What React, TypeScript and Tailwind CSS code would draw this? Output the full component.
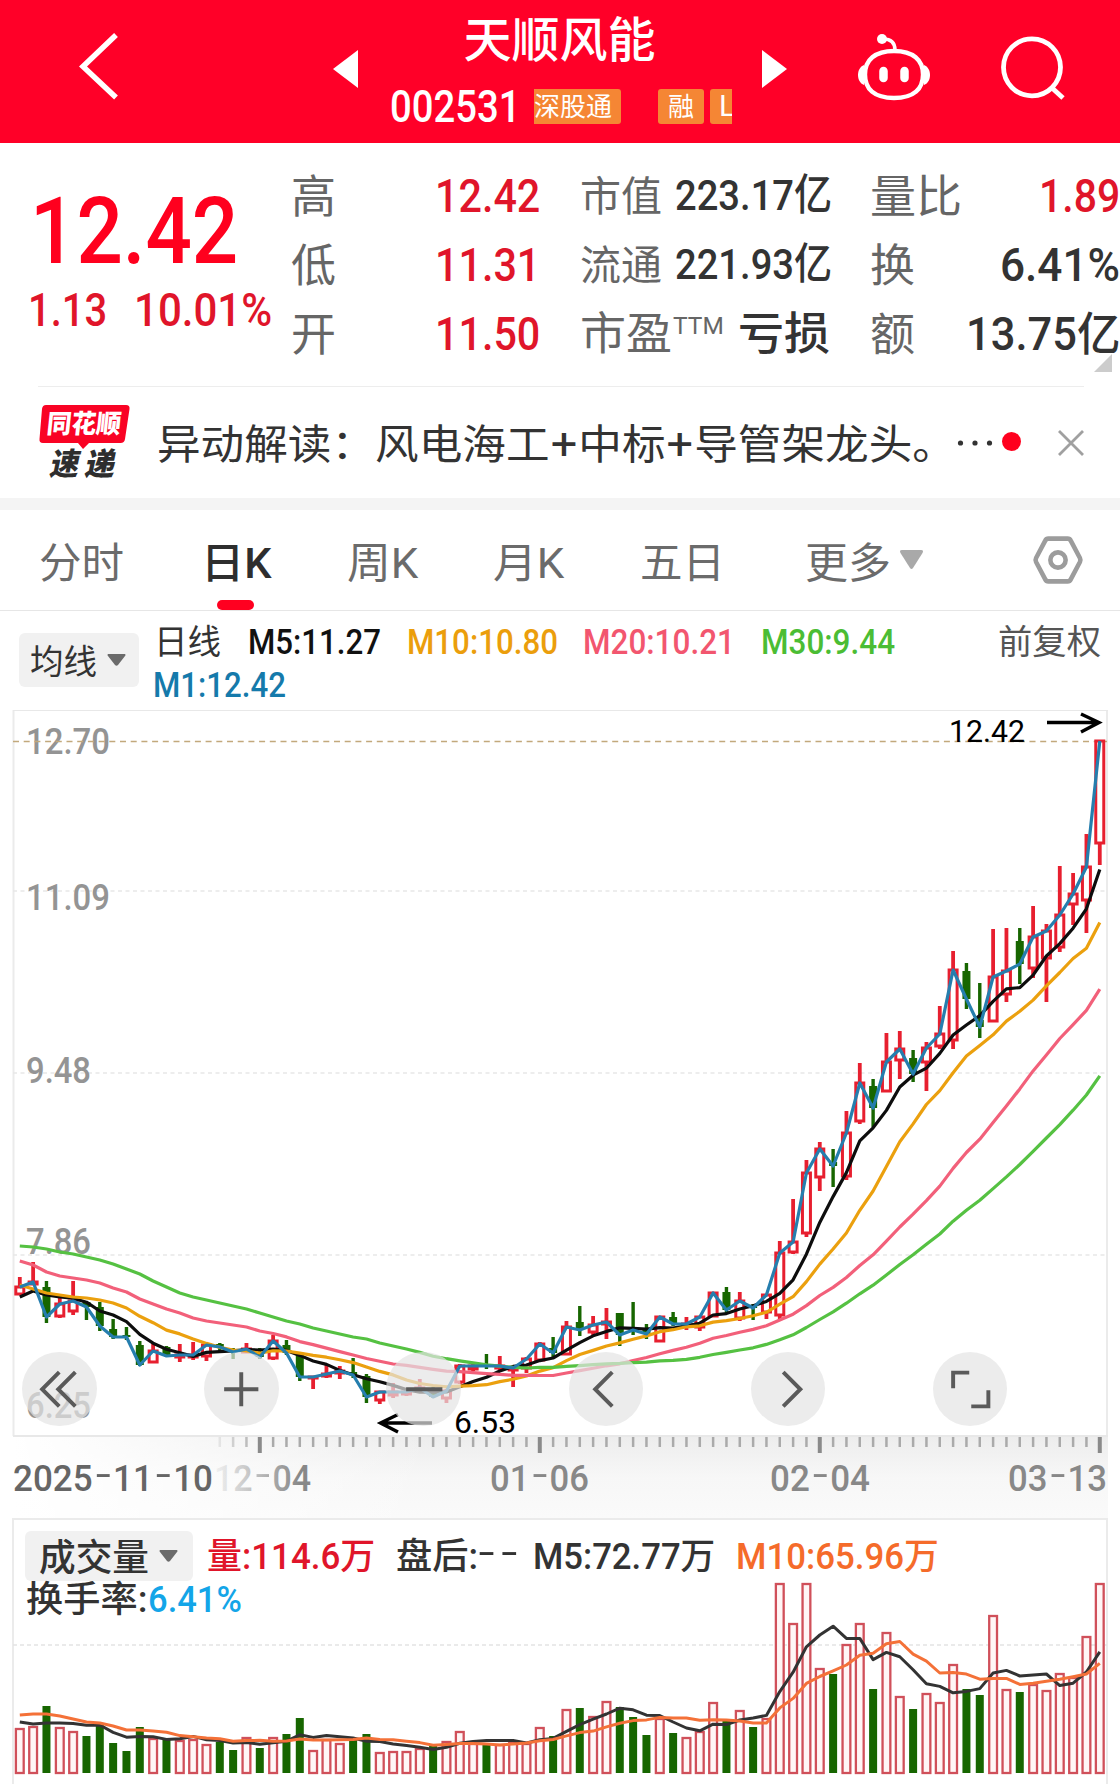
import { useLayoutEffect, useRef, useState } from 'react';
import type { ReactNode } from 'react';
import clsx from 'clsx';

type Candle = [up: 0 | 1, high: number, top: number, bottom: number, low: number];

// y offsets from the top of the price panel
const CANDLES: Candle[] = [
  [1, 567, 577, 584, 584], [1, 552, 572, 574, 574], [0, 571, 577, 607, 613], [1, 588, 594, 606, 608],
  [1, 571, 591, 601, 605], [0, 592, 592, 597, 610], [0, 592, 597, 616, 621], [0, 609, 619, 627, 629],
  [0, 617, 625, 627, 630], [0, 631, 635, 655, 656], [1, 633, 641, 652, 652], [0, 636, 637, 646, 647],
  [1, 634, 645, 647, 652], [1, 632, 645, 647, 650], [1, 633, 635, 646, 651], [0, 633, 634, 637, 641],
  [0, 638, 639, 642, 649], [1, 633, 639, 642, 643], [0, 638, 642, 647, 649], [1, 625, 631, 648, 650],
  [0, 630, 635, 643, 645], [0, 643, 645, 667, 671], [1, 666, 667, 668, 679], [1, 654, 664, 666, 668],
  [1, 656, 661, 663, 669], [0, 648, 662, 665, 668], [0, 664, 666, 687, 693], [1, 681, 682, 690, 694],
  [1, 673, 682, 685, 688], [1, 679, 682, 684, 686], [1, 669, 678, 680, 681], [0, 677, 679, 687, 688],
  [1, 679, 681, 688, 693], [1, 654, 656, 672, 674], [1, 653, 656, 659, 661], [0, 644, 654, 656, 659],
  [1, 646, 656, 658, 660], [1, 657, 658, 660, 677], [1, 647, 649, 658, 663], [1, 632, 634, 650, 651],
  [0, 627, 638, 643, 647], [1, 611, 617, 644, 645], [0, 596, 612, 620, 626], [1, 606, 615, 622, 625],
  [1, 598, 612, 614, 629], [0, 603, 603, 625, 636], [0, 592, 618, 620, 625], [0, 614, 620, 624, 629],
  [1, 607, 607, 631, 631], [0, 602, 607, 614, 616], [1, 607, 614, 616, 620], [1, 606, 607, 617, 621],
  [1, 582, 583, 606, 607], [0, 577, 582, 600, 603], [1, 582, 591, 608, 611], [0, 594, 595, 598, 610],
  [1, 584, 585, 602, 609], [1, 531, 543, 605, 610], [1, 489, 532, 542, 544], [1, 450, 463, 523, 527],
  [1, 432, 439, 467, 481], [0, 439, 452, 456, 477], [1, 401, 423, 466, 470], [1, 353, 373, 411, 414],
  [0, 369, 376, 398, 417], [1, 323, 352, 381, 381], [1, 321, 339, 350, 369], [0, 340, 348, 364, 372],
  [1, 332, 338, 352, 381], [1, 296, 324, 336, 339], [1, 241, 260, 330, 339], [0, 253, 261, 289, 299],
  [0, 273, 310, 317, 328], [1, 219, 267, 311, 311], [1, 218, 261, 284, 292], [0, 218, 231, 254, 274],
  [1, 196, 227, 258, 268], [1, 214, 221, 248, 292], [1, 156, 205, 237, 242], [1, 163, 184, 194, 215],
  [1, 124, 157, 190, 223], [1, 30, 31, 133, 155],
];

const VOLUMES = [
  45, 47, 67, 46, 42, 37, 48, 30, 22, 46, 35, 35, 33, 34, 29, 31, 23, 36, 25, 36,
  39, 55, 23, 34, 30, 33, 39, 21, 22, 22, 25, 28, 32, 42, 30, 30, 29, 31, 30, 46,
  37, 64, 65, 57, 72, 66, 56, 38, 55, 40, 36, 42, 71, 53, 63, 46, 55, 190, 150, 190,
  105, 99, 129, 150, 84, 141, 77, 64, 80, 71, 109, 84, 78, 158, 84, 81, 89, 83, 100, 96,
  137, 190,
];

// averages for the days whose window starts before the visible range
const M5_SEED = [587, 581, 585, 587];
const M10_SEED = [575, 579, 583, 585, 587, 588, 590, 593, 598];
const M20_SEED = [551, 555, 562, 566, 568, 570, 573, 578, 582, 589, 594, 599, 603, 608, 611, 613, 615, 617, 621];
const M30_SEED = [
  536, 537, 539, 542, 544, 547, 550, 554, 559, 564, 571, 577, 583, 587, 590,
  593, 596, 599, 603, 607, 611, 614, 618, 621, 624, 627, 629, 633, 636,
];
const V5_SEED = [51, 49, 50, 50];
const V10_SEED = [58, 59, 59, 57, 54, 51, 50, 47, 43];

const UP = '#e71f2f';
const DOWN = '#176600';
const AXIS_FONT = 'Roboto, "Liberation Sans", sans-serif';

const xAt = (i: number) => 19.8 + i * 13.333;
const closes = CANDLES.map(([up, , top, bottom]) => (up ? top : bottom));

function average(values: number[], days: number, seed: number[]) {
  return values.map((_, i) =>
    i < days - 1 ? seed[i] : values.slice(i - days + 1, i + 1).reduce((a, b) => a + b, 0) / days
  );
}

const toPoints = (ys: number[]) => ys.map((y, i) => `${xAt(i).toFixed(1)},${y.toFixed(1)}`).join(' ');

// Squeezes its text to the width of the box
function Fit({ children, className }: { children: ReactNode; className?: string }) {
  const box = useRef<HTMLSpanElement>(null);
  const text = useRef<HTMLSpanElement>(null);
  const [scale, setScale] = useState(1);

  useLayoutEffect(() => {
    if (box.current && text.current) setScale(box.current.clientWidth / text.current.offsetWidth);
  }, []);

  return (
    <span ref={box} className={clsx('block shrink-0 leading-none whitespace-nowrap', className)}>
      <span ref={text} className="inline-block origin-left" style={{ transform: `scaleX(${scale})` }}>
        {children}
      </span>
    </span>
  );
}

function Header() {
  return (
    <header className="flex h-[143px] items-start bg-[#ff0028] text-white">
      <svg className="mt-[31px] ml-[78px] h-[70px] w-[42px] shrink-0" viewBox="0 0 42 70" fill="none" stroke="currentColor" strokeWidth="5.500">
        <path d="M38 4 5 35.500 38 66.500" />
      </svg>
      <svg className="mt-[50px] ml-[213px] h-[38px] w-[25px] shrink-0" viewBox="0 0 25 38" fill="currentColor">
        <path d="M25 0v38L0 19z" />
      </svg>
      <div className="ml-[26px] w-[348px] shrink-0 overflow-hidden">
        <h1 className="mt-[12px] h-[58px] pl-[3px] text-center text-[48px] leading-[58px] font-medium">天顺风能</h1>
        <div className="mt-[18px] flex h-[36px] items-center pl-[6px]">
          <Fit className="w-[130px] text-[45px] font-medium">002531</Fit>
          <span className="ml-[14px] flex h-[35px] w-[87px] shrink-0 items-center rounded-r-[3px] bg-[#f58634] pt-[2px] text-[26px] leading-none">深股通</span>
          <span className="ml-[37px] flex h-[35px] w-[46px] shrink-0 items-center justify-center rounded-[3px] bg-[#f58634] pt-[2px] text-[26px] leading-none">融</span>
          <span className="ml-[6px] flex h-[35px] w-[22px] shrink-0 items-center overflow-hidden rounded-l-[3px] bg-[#f58634] pl-[9px] text-[30px] leading-none">L</span>
        </div>
      </div>
      <svg className="mt-[50px] ml-[30px] h-[38px] w-[25px] shrink-0" viewBox="0 0 25 38" fill="currentColor">
        <path d="M0 0v38l25-19z" />
      </svg>
      <svg className="mt-[33px] ml-[70px] h-[68px] w-[74px] shrink-0" viewBox="0 0 74 68" fill="none" stroke="currentColor" strokeWidth="4.400">
        <path d="M37 18c19 0 29 9 29 23.500S57 65 37 65 8 56 8 41.500 18 18 37 18z" />
        <path d="M26 6c8 0 12 4 12 11" strokeWidth="3.500" />
        <circle cx="25" cy="6" r="5" fill="currentColor" stroke="none" />
        <path d="M7 32c-8 3-8 17 0 20zM67 32c8 3 8 17 0 20z" fill="currentColor" stroke="none" />
        <path d="M26.500 38v7M47.500 38v7" strokeWidth="8.500" strokeLinecap="round" />
      </svg>
      <svg className="mt-[35px] ml-[69px] h-[66px] w-[66px] shrink-0" viewBox="0 0 66 66" fill="none" stroke="currentColor" strokeWidth="4.800">
        <circle cx="32" cy="32.300" r="28.500" />
        <path d="M51 52l12 11" />
      </svg>
    </header>
  );
}

function Quote() {
  return (
    <section className="relative flex h-[243px] text-[#666]">
      <div className="w-[291px] shrink-0 text-[#e0152a]">
        <Fit className="mt-[42px] ml-[30px] w-[208px] text-[93px] font-medium text-[#ff001e]">12.42</Fit>
        <div className="mt-[9px] flex text-[46px] font-medium">
          <Fit className="ml-[28px] w-[79px]">1.13</Fit>
          <Fit className="ml-[27px] w-[138px]">10.01%</Fit>
        </div>
      </div>
      <div className="w-[249px] shrink-0 pt-[18px] text-[45px]">
        {[['高', '12.42'], ['低', '11.31'], ['开', '11.50']].map(([label, value]) => (
          <div key={label} className="flex h-[69px] items-center justify-between">
            <span className="pt-[3px] leading-none">{label}</span>
            <Fit className="w-[105px] text-[46px] font-medium text-[#e0152a]">{value}</Fit>
          </div>
        ))}
      </div>
      <div className="ml-[40px] w-[252px] shrink-0 pt-[18px] text-[41px]">
        {[['市值', '223.17亿'], ['流通', '221.93亿']].map(([label, value]) => (
          <div key={label} className="flex h-[69px] items-center justify-between">
            <span className="pt-[4px] leading-none">{label}</span>
            <Fit className="w-[157px] text-[43px] font-medium text-[#333]">{value}</Fit>
          </div>
        ))}
        <div className="flex h-[69px] items-center">
          <Fit className="w-[92px] pt-[2px] text-[45px]">市盈</Fit>
          <Fit className="mb-[15px] ml-[1px] w-[51px] text-[24px]">TTM</Fit>
          <Fit className="ml-[14px] w-[92px] pt-[2px] text-[45px] font-medium text-[#333]">亏损</Fit>
        </div>
      </div>
      <div className="ml-[38px] w-[250px] shrink-0 pt-[18px] text-[45px] text-[#333]">
        <div className="flex h-[69px] items-center justify-between">
          <Fit className="w-[92px] pt-[3px] text-[#666]">量比</Fit>
          <Fit className="w-[81px] text-[46px] font-medium text-[#e0152a]">1.89</Fit>
        </div>
        <div className="flex h-[69px] items-center justify-between">
          <span className="pt-[3px] leading-none text-[#666]">换</span>
          <Fit className="w-[120px] text-[46px] font-medium">6.41%</Fit>
        </div>
        <div className="flex h-[69px] items-center justify-between">
          <span className="pt-[3px] leading-none text-[#666]">额</span>
          <Fit className="w-[154px] text-[46px] font-medium">13.75亿</Fit>
        </div>
      </div>
      <svg className="absolute right-[8px] bottom-[14px] h-[18px] w-[18px]" viewBox="0 0 18 18" fill="#ccc">
        <path d="M18 0v18H0z" />
      </svg>
    </section>
  );
}

function NewsBar() {
  return (
    <section className="mr-[36px] ml-[38px] flex h-[112px] items-center border-t border-[#ededed]">
      <div className="relative flex h-[80px] w-[93px] shrink-0 flex-col items-center">
        <svg className="absolute inset-0 h-[80px] w-[93px]" viewBox="0 0 93 80" fill="#f90324">
          <path d="M8 2h80q4 0 3.500 4L87 36q-.5 4-4.500 4H51l-6 6-5-6H5q-4 0-3.500-4L4 6q.5-4 4-4z" />
        </svg>
        <Fit className="relative mt-[8px] mr-[2px] w-[74px] -skew-x-6 text-[26px] font-black text-white">同花顺</Fit>
        <div className="relative mt-[12px] mr-[3px] flex -skew-x-12 gap-[6px] text-[31px] leading-none font-black text-[#2e2e2e]">
          <Fit className="w-[29px]">速</Fit>
          <Fit className="w-[30px]">递</Fit>
        </div>
      </div>
      <Fit className="ml-[26px] w-[799px] pt-[3px] text-[41px] text-[#333]">
        异动解读：风电海工<span className="px-[1px] text-[44px] leading-none">+</span>中标
        <span className="px-[1px] text-[44px] leading-none">+</span>导管架龙头。
      </Fit>
      <svg className="ml-px h-[6px] w-[36px] shrink-0" viewBox="0 0 36 6" fill="#333">
        <circle cx="3.500" cy="3" r="2.600" />
        <circle cx="18" cy="3" r="2.600" />
        <circle cx="32.500" cy="3" r="2.600" />
      </svg>
      <span className="mb-[2px] ml-[9px] h-[19px] w-[19px] shrink-0 rounded-full bg-[#ff001e]" />
      <svg className="ml-auto h-[26px] w-[26px] shrink-0" viewBox="0 0 26 26" fill="none" stroke="#a0a0a0" strokeWidth="2.800">
        <path d="M1 1l24 24M25 1L1 25" />
      </svg>
    </section>
  );
}

function Tabs() {
  return (
    <nav className="flex h-[101px] items-center border-b border-[#e6e6e6] text-[42px] leading-none text-[#6b6b6b]">
      <Fit className="ml-[39px] w-[85px] pt-[7px]">分时</Fit>
      <span className="relative ml-[77px] flex h-full shrink-0 items-center font-medium text-[#2e2e2e]">
        <Fit className="w-[71px] pt-[7px]">日K</Fit>
        <i className="absolute bottom-0 left-[16px] h-[10px] w-[37px] rounded-[5px] bg-[#ff0020]" />
      </span>
      <Fit className="ml-[75px] w-[71px] pt-[7px]">周K</Fit>
      <Fit className="ml-[75px] w-[71px] pt-[7px]">月K</Fit>
      <Fit className="ml-[76px] w-[85px] pt-[7px]">五日</Fit>
      <Fit className="ml-[80px] w-[86px] pt-[7px]">更多</Fit>
      <svg className="ml-[9px] h-[20px] w-[23px]" viewBox="0 0 23 20" fill="#a9a9a9">
        <path d="M2 0h19q3 0 1.500 3L13 18q-1.500 2-3 0L.5 3Q-1 0 2 0z" />
      </svg>
      <svg className="ml-[109px] h-[50px] w-[52px]" viewBox="0 0 51 48" fill="none" stroke="#9c9c9c" strokeWidth="4.500" strokeLinejoin="round">
        <path d="M16 3h19q2 0 3 2l9 17q1 2 0 4l-9 17q-1 2-3 2H16q-2 0-3-2L4 26q-1-2 0-4l9-17q1-2 3-2z" />
        <circle cx="25.500" cy="24" r="7.500" />
      </svg>
    </nav>
  );
}

function Caret() {
  return (
    <svg className="h-[12px] w-[19px] shrink-0" viewBox="0 0 19 12" fill="#6b6b6b">
      <path d="M1 0h17q1 1 0 2l-7 9q-1.500 1.500-3 0L1 2Q0 1 1 0z" />
    </svg>
  );
}

function AverageLegend() {
  return (
    <div className="flex h-[98.500px] items-start text-[35px] font-medium">
      <button className="mt-[22px] ml-[19px] flex h-[54px] w-[120px] shrink-0 items-center rounded-[6px] bg-[#f1f1f1] pl-[11px] text-[34px] font-normal text-[#333]">
        <Fit className="mr-[10px] w-[67px] pt-[3px]">均线</Fit>
        <Caret />
      </button>
      <div className="ml-[15px] flex-1 pt-[14px]">
        <div className="flex">
          <Fit className="w-[67px] text-[34px] font-normal text-[#333]">日线</Fit>
          <Fit className="ml-[27px] w-[133px] text-[#111]">M5:11.27</Fit>
          <Fit className="ml-[26px] w-[151px] text-[#eb9e0c]">M10:10.80</Fit>
          <Fit className="ml-[25px] w-[152px] text-[#f2566f]">M20:10.21</Fit>
          <Fit className="ml-[26px] w-[134px] text-[#4bbd34]">M30:9.44</Fit>
          <Fit className="ml-[103px] w-[103px] text-[34px] font-normal text-[#555]">前复权</Fit>
        </div>
        <Fit className="mt-[8px] -ml-[1px] w-[133px] text-[#157aab]">M1:12.42</Fit>
      </div>
    </div>
  );
}

// Dates on the axis have a long thin dash
function DateLabel({ x, width, fill, children }: { x: number; width: number; fill?: string; children: string }) {
  return (
    <text x={x} y="781" fill={fill} textLength={width} lengthAdjust="spacingAndGlyphs">
      {children.split('-').map((part, i) => [
        i > 0 && <tspan key={`dash-${i}`} dx="3" dy="3" fontSize="58" fontWeight="300">-</tspan>,
        <tspan key={i} dx={i > 0 ? 2 : 0} dy={i > 0 ? -3 : 0}>{part}</tspan>,
      ])}
    </text>
  );
}

function PriceChart() {
  const priceLabels: [string, number, number][] = [
    ['12.70', 45, 84], ['11.09', 201, 84], ['9.48', 374, 65], ['7.86', 544.5, 65], ['6.25', 709, 65],
  ];

  return (
    <svg className="block h-[808px] w-full" viewBox="0 0 1120 808" fill="none">
      <defs>
        <linearGradient id="axis" x1="0" y1="0" x2="0" y2="1">
          <stop offset="0" stopColor="#ededed" />
          <stop offset="0.5" stopColor="#f7f7f7" />
          <stop offset="1" stopColor="#fafafa" />
        </linearGradient>
        <linearGradient id="axis-left" x1="0" y1="0" x2="1" y2="0">
          <stop offset="0" stopColor="#fff" />
          <stop offset="1" stopColor="#fff" stopOpacity="0" />
        </linearGradient>
        <linearGradient id="fade" gradientUnits="userSpaceOnUse" x1="212" y1="0" x2="300" y2="0">
          <stop offset="0" stopColor="#888" stopOpacity="0.05" />
          <stop offset="1" stopColor="#888" />
        </linearGradient>
      </defs>

      <rect x="13" y="727" width="1095" height="81" fill="url(#axis)" />
      <rect x="13" y="727" width="420" height="81" fill="url(#axis-left)" />
      <path d="M13.500 726V0M1107 0v726" stroke="#ebebeb" strokeWidth="2" />
      <path d="M13 0h1095M13 726h1095" stroke="#e8e8e8" strokeWidth="2" />
      <path d="M13 181h1094M13 363h1094M13 545h1094" stroke="#e8e8e8" strokeWidth="1.500" strokeDasharray="4 3.500" />

      <g fill="#949494" fontFamily={AXIS_FONT} fontSize="36" fontWeight="500">
        {priceLabels.map(([label, y, width]) => (
          <text key={label} x="26" y={y - 1} textLength={width} lengthAdjust="spacingAndGlyphs">{label}</text>
        ))}
      </g>
      <path d="M13 31.500h1094" stroke="#c2a97c" strokeWidth="1.600" strokeDasharray="6 4.700" />

      {CANDLES.map(([up, high, top, bottom, low], i) => {
        const x = xAt(i);
        return up ? (
          <g key={i} stroke={UP} strokeWidth="3">
            <path d={`M${x} ${high}V${top}M${x} ${bottom}V${low}`} strokeWidth="3.800" />
            <rect x={x - 4} y={top} width="8" height={Math.max(bottom - top, 1)} fill="#fff" />
          </g>
        ) : (
          <g key={i} fill={DOWN}>
            <rect x={x - 1.7} y={high} width="3.400" height={low - high} />
            <rect x={x - 4} y={top} width="8" height={bottom - top} />
          </g>
        );
      })}

      <g strokeWidth="3.200" strokeLinejoin="round">
        <polyline points={toPoints(average(closes, 5, M5_SEED))} stroke="#0d0d0d" />
        <polyline points={toPoints(average(closes, 10, M10_SEED))} stroke="#eba00e" />
        <polyline points={toPoints(average(closes, 20, M20_SEED))} stroke="#f2607a" />
        <polyline points={toPoints(average(closes, 30, M30_SEED))} stroke="#55c142" />
        <polyline points={toPoints(closes)} stroke="#257eae" />
      </g>

      <g fill="#000" fontFamily={AXIS_FONT} fontSize="32">
        <text x="949" y="31.500" textLength="76" lengthAdjust="spacingAndGlyphs">12.42</text>
        <text x="454" y="723" textLength="62" lengthAdjust="spacingAndGlyphs">6.53</text>
      </g>
      <g stroke="#000" strokeWidth="3.400">
        <path d="M1047 12.500h51M1081 4l18 8.500L1081 22" />
        <path d="M432 713h-51M398 704.500L380.500 713l17.500 9" />
      </g>

      {CANDLES.map((_, i) => {
        if (i < 15) return null;
        const major = i % 21 === 18;
        return (
          <path
            key={i}
            d={`M${xAt(i)} 727v${major ? 16 : 10}`}
            stroke={major ? '#8a8a8a' : '#aaa'}
            strokeWidth={major ? 4 : 2.5}
            opacity={i < 18 ? (i - 14) * 0.25 : 1}
          />
        );
      })}
      <g fontFamily={AXIS_FONT} fontSize="37" fontWeight="500" fill="#888">
        <DateLabel x={13} width={200} fill="#666">2025-11-10</DateLabel>
        <DateLabel x={214} width={97} fill="url(#fade)">12-04</DateLabel>
        <DateLabel x={490} width={99}>01-06</DateLabel>
        <DateLabel x={770} width={100}>02-04</DateLabel>
        <DateLabel x={1008} width={99}>03-13</DateLabel>
      </g>
    </svg>
  );
}

function ChartControls() {
  const icons = [
    'M37 20 20 37l17 17M53 20 36 37l17 17',
    'M37 20v34M20 37h34',
    'M20 37h36',
    'M43 20 26 37l17 17',
    'M32 20l17 17-17 17',
    'M20 36V20.500h16M38 54h17V38',
  ];
  return (
    <div className="absolute top-[642px] left-[22px] flex gap-[107.700px]">
      {icons.map(d => (
        <button key={d} className="h-[74.500px] w-[74.500px] rounded-full bg-[#e4e4e4]/70">
          <svg viewBox="0 0 74 74" fill="none" stroke="#5a5a5a" strokeWidth="3.900">
            <path d={d} />
          </svg>
        </button>
      ))}
    </div>
  );
}

function VolumePanel() {
  const base = 194;
  return (
    <section className="mr-[12px] ml-[12px] h-[267px] border-t-2 border-r-2 border-l-2 border-[#ebebeb] text-[36px] font-medium text-[#333]">
      <div className="flex h-[73px] items-center pt-[2px] pl-[11px]">
        <button className="mb-[2px] flex h-[50px] w-[168px] shrink-0 items-center rounded-[6px] bg-[#f1f1f1] pl-[14px] text-[37px]">
          <Fit className="mr-[10px] w-[110px] pt-[4px]">成交量</Fit>
          <Caret />
        </button>
        <Fit className="ml-[14px] w-[168px] text-[#e0152a]">量:114.6万</Fit>
        <Fit className="ml-[21px] w-[128px]">
          盘后:<span className="align-[-3px] text-[58px] leading-[0] font-light tracking-[6px]">--</span>
        </Fit>
        <Fit className="ml-[9px] w-[182px]">M5:72.77万</Fit>
        <Fit className="ml-[21px] w-[203px] text-[#f56b2a]">M10:65.96万</Fit>
      </div>
      <div className="-mt-[11px] flex pl-[12px]">
        <Fit className="w-[122px]">换手率:</Fit>
        <Fit className="w-[94px] text-[#13a5e8]">6.41%</Fit>
      </div>
      <svg className="-mt-[39px] -ml-[14px] block h-[204px] w-[1120px]" viewBox="0 0 1120 204" fill="none">
        <path d="M13 66h1094" stroke="#e3e3e3" strokeWidth="1.500" strokeDasharray="4 3" />
        {VOLUMES.map((v, i) =>
          CANDLES[i][0] ? (
            <rect key={i} x={xAt(i) - 3.9} y={base - v + 1} width="7.800" height={v - 1} fill="#fff6f6" stroke="#d0505a" strokeWidth="2.300" />
          ) : (
            <rect key={i} x={xAt(i) - 4} y={base - v} width="8" height={v} fill={DOWN} />
          )
        )}
        <g strokeWidth="3" strokeLinejoin="round">
          <polyline points={toPoints(average(VOLUMES, 5, V5_SEED).map(v => base - v))} stroke="#333" />
          <polyline points={toPoints(average(VOLUMES, 10, V10_SEED).map(v => base - v))} stroke="#f47138" />
        </g>
      </svg>
    </section>
  );
}

export default function App() {
  return (
    <main className="h-[1784px] w-[1120px] overflow-hidden bg-white font-[Roboto,'Noto_Sans_CJK_SC',sans-serif]">
      <Header />
      <Quote />
      <NewsBar />
      <div className="h-[12px] bg-[#f4f4f4]" />
      <Tabs />
      <AverageLegend />
      <div className="relative">
        <PriceChart />
        <ChartControls />
      </div>
      <VolumePanel />
    </main>
  );
}
